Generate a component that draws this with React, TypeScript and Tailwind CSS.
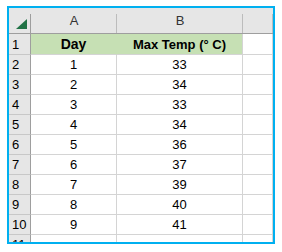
const rows = [
  ['1', '33'],
  ['2', '34'],
  ['3', '33'],
  ['4', '34'],
  ['5', '36'],
  ['6', '37'],
  ['7', '39'],
  ['8', '40'],
  ['9', '41'],
]

const grid = 'border-r border-b border-[#d4d4d4]'
const rowHead = 'bg-[#e6e6e6] border-r border-b border-r-[#9e9e9e] border-b-[#c8c8c8] pl-[3px] flex items-center'
const colHead =
  "relative bg-[#e6e6e6] border-b border-[#9e9e9e] flex items-center justify-center text-[#333] after:content-[''] after:absolute after:right-0 after:top-[6px] after:bottom-0 after:w-px after:bg-[#bcbcbc]"

export default function App() {
  return (
    <div className="w-[282px] h-[252px] bg-white pl-[7px] pt-[6px]" style={{ fontFamily: '"Liberation Sans", Arial, sans-serif' }}>
      <div className="w-[268px] h-[238px] border-2 border-[#00b0f0] overflow-hidden">
        <div className="grid grid-cols-[22px_86px_126px_1fr] grid-rows-[26px_21px_repeat(10,20px)] text-[13px] text-black leading-none">
          {/* corner */}
          <div className="relative bg-[#e6e6e6] border-b border-[#9e9e9e] flex items-end justify-end pr-[4px] pb-[4px] after:content-[''] after:absolute after:right-0 after:top-[6px] after:bottom-0 after:w-px after:bg-[#9e9e9e]">
            <svg width="11" height="10" viewBox="0 0 11 10">
              <polygon points="11,0 11,10 0,10" fill="#217346" />
            </svg>
          </div>
          <div className={colHead}>A</div>
          <div className={colHead}>B</div>
          <div className={colHead}></div>

          {/* row 1 */}
          <div className={rowHead}>1</div>
          <div className="bg-[#c6e0b4] border-r border-b border-[#d4d4d4] border-r-[#c6e0b4] flex items-center justify-center font-bold text-[14px]">Day</div>
          <div className="bg-[#c6e0b4] border-r border-b border-[#d4d4d4] flex items-center justify-center font-bold">Max Temp (° C)</div>
          <div className={grid}></div>

          {rows.map(([d, t], i) => (
            <div key={i} className="contents">
              <div className={rowHead}>{i + 2}</div>
              <div className={`${grid} flex items-center justify-center`}>{d}</div>
              <div className={`${grid} flex items-center justify-center`}>{t}</div>
              <div className={grid}></div>
            </div>
          ))}

          {/* partial row 11 */}
          <div className={rowHead}>11</div>
          <div className={grid}></div>
          <div className={grid}></div>
          <div className={grid}></div>
        </div>
      </div>
    </div>
  )
}
